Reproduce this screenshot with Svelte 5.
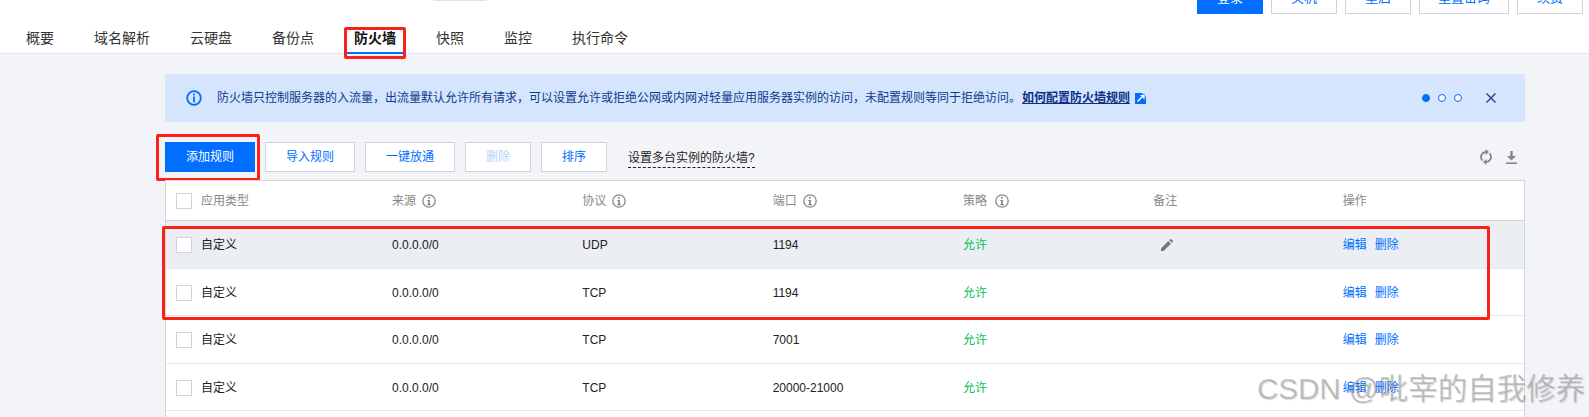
<script>
  const topActions = [
    { label: '登录', primary: true },
    { label: '关机' },
    { label: '重启' },
    { label: '重置密码', wide: true },
    { label: '续费' }
  ];
  const tabs = ['概要', '域名解析', '云硬盘', '备份点', '防火墙', '快照', '监控', '执行命令'];
  const columns = [
    { label: '来源', tip: true },
    { label: '协议', tip: true },
    { label: '端口', tip: true },
    { label: '策略', tip: true, far: true },
    { label: '备注' },
    { label: '操作', ops: true }
  ];
  const rows = [
    { proto: 'UDP', port: '1194', hover: true },
    { proto: 'TCP', port: '1194' },
    { proto: 'TCP', port: '7001' },
    { proto: 'TCP', port: '20000-21000' }
  ];
</script>

<div class="page">
  <header class="head">
    <div class="topbar">
      <span class="pill"></span>
      {#each topActions as a}
        <button class="btn top" class:primary={a.primary} class:wide={a.wide}>{a.label}</button>
      {/each}
    </div>
    <nav class="tabs">
      {#each tabs as t}
        <div class="tab" class:active={t === '防火墙'}>
          {t}
          {#if t === '防火墙'}<span class="mark tabmark"></span>{/if}
        </div>
      {/each}
    </nav>
  </header>

  <main class="main">
    <div class="alert">
      <svg class="alert-icon" viewBox="0 0 16 16" width="16" height="16">
        <circle cx="8" cy="8" r="6.8" fill="none" stroke="#006eff" stroke-width="1.8" />
        <rect x="7.1" y="3.6" width="1.8" height="1.8" fill="#006eff" />
        <rect x="7.1" y="6.5" width="1.8" height="6" fill="#006eff" />
      </svg>
      <p class="alert-text">防火墙只控制服务器的入流量，出流量默认允许所有请求，可以设置允许或拒绝公网或内网对轻量应用服务器实例的访问，未配置规则等同于拒绝访问。<a class="alert-link">如何配置防火墙规则</a></p>
      <svg class="ext" viewBox="0 0 11 11" width="11" height="11">
        <path d="M0 0h11v11H0z" fill="#006eff" />
        <path d="M2.5 8.5L8 3" stroke="#fff" stroke-width="1.6" fill="none" />
        <path d="M5 2h4.6v4.6L8 5V3.4H6.4z" fill="#fff" />
        <path d="M7.5 0h3.5v3.5H9.8V1.2H7.5z" fill="#d4e5fd" />
      </svg>
      <div class="dots">
        <span class="dot on"></span><span class="dot"></span><span class="dot"></span>
      </div>
      <svg class="close" viewBox="0 0 10 10" width="10" height="10">
        <path d="M.5.5l9 9M9.5.5l-9 9" stroke="#1c3f8f" stroke-width="1.4" fill="none" />
      </svg>
    </div>

    <div class="toolbar">
      <button class="btn primary add">添加规则<span class="mark addmark"></span></button>
      <button class="btn">导入规则</button>
      <button class="btn">一键放通</button>
      <button class="btn short" disabled>删除</button>
      <button class="btn short">排序</button>
      <span class="hint">设置多台实例的防火墙?</span>
      <div class="tools">
        <svg viewBox="0 0 12 16" width="12" height="16">
          <path d="M7.4 3.2A5 5 0 0 0 2.6 11.6M4.6 12.8A5 5 0 0 0 9.4 4.4" fill="none" stroke="#888" stroke-width="1.9" />
          <path d="M5.6 0l3.4 3-3.4 3zM6.4 16L3 13l3.4-3z" fill="#888" />
        </svg>
        <svg viewBox="0 0 11 13" width="11" height="13">
          <path d="M4.3 0h2.4v5H10L5.5 9.6 1 5h3.3z" fill="#888" />
          <rect x="0" y="11.4" width="11" height="1.6" fill="#888" />
        </svg>
      </div>
    </div>

    <div class="table">
      <div class="row headrow">
        <div class="cell first"><span class="check"></span><span>应用类型</span></div>
        {#each columns as c}
          <div class="cell" class:far={c.far} class:ops-col={c.ops}>
            <span>{c.label}</span>
            {#if c.tip}
              <svg viewBox="0 0 14 14" width="14" height="14">
                <circle cx="7" cy="7" r="6.2" fill="none" stroke="#888" stroke-width="1.3" />
                <rect x="6.2" y="3" width="1.6" height="1.6" fill="#777" />
                <path d="M5.4 6h2.4v4.2h1v1H5.2v-1h1.1V7H5.4z" fill="#777" />
              </svg>
            {/if}
          </div>
        {/each}
      </div>
      {#each rows as r}
        <div class="row body" class:hover={r.hover}>
          <div class="cell first"><span class="check"></span><span>自定义</span></div>
          <div class="cell">0.0.0.0/0</div>
          <div class="cell">{r.proto}</div>
          <div class="cell">{r.port}</div>
          <div class="cell allow">允许</div>
          <div class="cell">
            {#if r.hover}
              <svg class="pencil" viewBox="0 0 12 12" width="12" height="12">
                <path d="M0 12V9.4L7.3 2.1 9.9 4.7 2.6 12zM8.2 1.2L9.2.2a.7.7 0 0 1 1 0l1.6 1.6a.7.7 0 0 1 0 1l-1 1z" fill="#777" />
              </svg>
            {/if}
          </div>
          <div class="cell ops ops-col"><a>编辑</a><a>删除</a></div>
        </div>
      {/each}
      <span class="mark rowmark"></span>
    </div>
  </main>

  <div class="watermark">CSDN @吡宰的自我修养</div>
</div>

<style>
  :global(body) {
    margin: 0;
    overflow: hidden;
    background: #f2f4f8;
  }
  .page {
    position: relative;
    height: 417px;
    overflow: hidden;
    font: 12px/18px "Liberation Sans", "Noto Sans CJK SC", sans-serif;
    color: #222;
  }
  .head {
    display: flow-root;
    background: #fff;
    border-bottom: 1px solid #e3e6eb;
    height: 54px;
    box-sizing: border-box;
  }
  .topbar {
    display: flex;
    gap: 8px;
    justify-content: flex-end;
    align-items: flex-start;
    height: 32px;
    margin-top: -18px;
    padding-right: 6px;
  }
  .pill {
    width: 58px;
    height: 19px;
    margin: 0 auto 0 431px;
    border: 1px solid #dfe2e8;
    border-radius: 4px;
    box-sizing: border-box;
  }
  .btn {
    height: 30px;
    width: 90px;
    padding: 0;
    font: inherit;
    background: #fff;
    border: 1px solid #d0d5dd;
    color: #006eff;
    position: relative;
  }
  .btn.primary {
    background: #006eff;
    border-color: #006eff;
    color: #fff;
  }
  .btn:disabled {
    color: #b5d2ff;
  }
  .btn.short {
    width: 66px;
  }
  .btn.top {
    width: 66px;
    height: 32px;
    font-size: 13px;
  }
  .btn.top.wide {
    width: 90px;
  }
  .tabs {
    display: flex;
    gap: 26px;
    height: 40px;
    padding: 10px 0 0 19px;
    box-sizing: border-box;
  }
  .tab {
    position: relative;
    height: 30px;
    padding: 0 7px;
    box-sizing: border-box;
    font-size: 14px;
    line-height: 29px;
    color: #333;
  }
  .tab.active {
    font-weight: 700;
    color: #111;
    border-bottom: 2px solid #006eff;
  }
  .mark {
    position: absolute;
    box-sizing: border-box;
    border: 3px solid #fb2119;
    border-radius: 2px;
    pointer-events: none;
  }
  .tabmark {
    inset: 3px -3px -7px;
  }
  .addmark {
    inset: -9px -6px -10px -10px;
  }
  .main {
    margin: 20px 64px 0 165px;
  }
  .alert {
    display: flex;
    align-items: center;
    height: 48px;
    background: #d4e5fd;
    padding: 0 29px 0 21px;
  }
  .alert-icon {
    flex: none;
  }
  .alert-text {
    margin: 0 0 0 15px;
    color: #0e3b8c;
    white-space: nowrap;
  }
  .alert-link {
    margin-left: 1px;
    font-weight: 700;
    color: #0a2f86;
    text-decoration: underline;
  }
  .ext {
    margin-left: 5px;
  }
  .dots {
    display: flex;
    gap: 8px;
    margin-left: auto;
  }
  .dot {
    width: 8px;
    height: 8px;
    border: 1px solid #006eff;
    border-radius: 50%;
    box-sizing: border-box;
    background: #fff;
  }
  .dot.on {
    background: #006eff;
  }
  .close {
    margin-left: 24px;
  }
  .toolbar {
    display: flex;
    align-items: center;
    gap: 10px;
    margin-top: 20px;
    padding-right: 8px;
  }
  .hint {
    margin-left: 11px;
    color: #222;
    border-bottom: 1px dashed #222;
    line-height: 17px;
    margin-top: 3px;
  }
  .tools {
    display: flex;
    align-items: center;
    gap: 14px;
    margin-left: auto;
  }
  .table {
    position: relative;
    margin-top: 8px;
    min-height: 260px;
    background: #fff;
    border: 1px solid #d0d5dd;
  }
  .row {
    display: grid;
    grid-template-columns: 216px repeat(6, 1fr);
    align-items: center;
    box-sizing: border-box;
    border-bottom: 1px solid #e5e8ee;
  }
  .headrow {
    height: 40px;
    color: #888;
    border-bottom: 1px solid #d0d5dd;
  }
  .body {
    height: 47.5px;
    padding-top: 2px;
  }
  .hover {
    background: #ebeef3;
  }
  .cell {
    display: flex;
    align-items: center;
    gap: 6px;
    padding-left: 10px;
  }
  .cell.far {
    gap: 8px;
  }
  .first {
    gap: 9px;
  }
  .ops-col {
    padding-left: 9px;
  }
  .check {
    width: 16px;
    height: 16px;
    box-sizing: border-box;
    background: #fff;
    border: 1px solid #d0d5dd;
  }
  .allow {
    color: #0abf5b;
  }
  .pencil {
    margin-left: 8px;
  }
  .ops {
    gap: 8px;
    color: #006eff;
  }
  .rowmark {
    left: -4px;
    top: 45px;
    width: 1328px;
    height: 94px;
  }
  .watermark {
    position: absolute;
    left: 1257px;
    top: 371px;
    font-size: 29.5px;
    line-height: 36px;
    white-space: nowrap;
    color: rgba(120, 120, 120, 0.38);
    text-shadow: 1px 1px 1px rgba(120, 120, 120, 0.25);
  }
</style>
